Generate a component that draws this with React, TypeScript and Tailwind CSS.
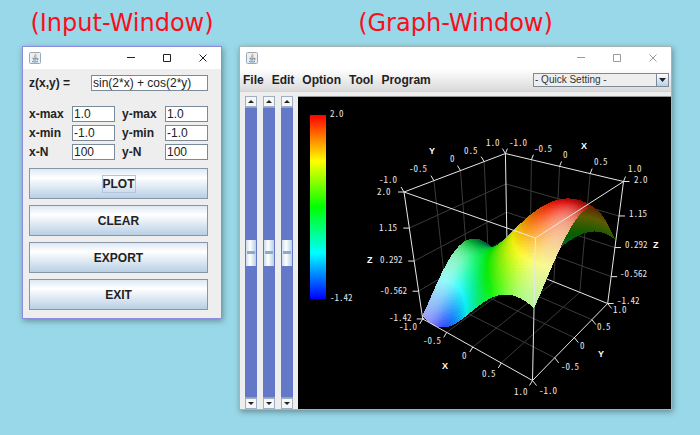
import { type ReactNode } from 'react'
import clsx from 'clsx'

type Point = [number, number]

const ALPHA = 1.238
const BETA = 1.318
const GAMMA = 1.238
const NEAR: Point = [535.5, 238]
const LEFT: Point = [404, 192]
const RIGHT: Point = [623.5, 181.5]
const DOWN: Point = [532.5, 380.5]

const Z_MIN = -1.42
const Z_MAX = 2
const STEPS = 80

// Perspective projection, written as a weighted mix of the nearest box corner and its neighbours
function project(x: number, y: number, z: number): Point {
  const u = (1 - x) / 2
  const v = (y + 1) / 2
  const w = (Z_MAX - z) / (Z_MAX - Z_MIN)
  const k = 1 - u - v - w
  const weight = k + u * ALPHA + v * BETA + w * GAMMA
  const mix = (i: 0 | 1) =>
    (k * NEAR[i] + u * ALPHA * LEFT[i] + v * BETA * RIGHT[i] + w * GAMMA * DOWN[i]) / weight
  return [mix(0), mix(1)]
}

const height = (x: number, y: number) => Math.sin(2 * x) + Math.cos(2 * y)

function hueToRgb(hue: number) {
  const channel = (n: number) => {
    const k = (n + hue / 60) % 6
    return 255 * (1 - Math.max(0, Math.min(k, 4 - k, 1)))
  }
  return [channel(5), channel(3), channel(1)]
}

function shade(x: number, y: number) {
  const nx = -1.17 * Math.cos(2 * x)
  const ny = 1.17 * Math.sin(2 * y)
  const len = Math.hypot(nx, ny, 1)
  const diffuse = (-0.2 * nx - 0.7 * ny + 0.65) / len
  const spec = Math.max(0, (0.3 * nx - 0.7 * ny + 0.65) / len)
  const light = Math.min(1, 0.36 + 0.64 * Math.max(0, diffuse))
  const white = 0.6 * Math.pow(spec, 5)
  const t = (Z_MAX - height(x, y)) / (Z_MAX - Z_MIN)
  const rgb = hueToRgb(240 * t).map((c) => Math.round(c * light * (1 - white) + 255 * white))
  return `rgb(${rgb.join(',')})`
}

function buildSurface() {
  const cells: { points: string; color: string }[] = []
  const d = 2 / STEPS
  // far cells first, so that near ones cover them
  for (let j = STEPS - 1; j >= 0; j--) {
    for (let i = 0; i < STEPS; i++) {
      const x = -1 + i * d
      const y = -1 + j * d
      const corners: Point[] = [
        [x, y],
        [x + d, y],
        [x + d, y + d],
        [x, y + d],
      ]
      cells.push({
        points: corners.map(([a, b]) => project(a, b, height(a, b)).map((n) => n.toFixed(2)).join(',')).join(' '),
        color: shade(x + d / 2, y + d / 2),
      })
    }
  }
  return cells
}

const surface = buildSurface()

type Vec3 = [number, number, number]

const H = [-0.5, 0, 0.5]
const V = [1.145, 0.29, -0.565]

const gridLines: [Vec3, Vec3][] = [
  ...H.flatMap((s): [Vec3, Vec3][] => [
    [[-1, s, Z_MIN], [-1, s, Z_MAX]],
    [[s, 1, Z_MIN], [s, 1, Z_MAX]],
    [[-1, s, Z_MIN], [1, s, Z_MIN]],
    [[s, -1, Z_MIN], [s, 1, Z_MIN]],
  ]),
  ...V.flatMap((z): [Vec3, Vec3][] => [
    [[-1, -1, z], [-1, 1, z]],
    [[-1, 1, z], [1, 1, z]],
  ]),
]

const backEdges: [Vec3, Vec3][] = [
  [[-1, 1, Z_MIN], [-1, 1, Z_MAX]],
  [[-1, 1, Z_MIN], [1, 1, Z_MIN]],
  [[-1, 1, Z_MIN], [-1, -1, Z_MIN]],
]

const frontEdges: [Vec3, Vec3][] = [
  [[-1, -1, Z_MAX], [-1, 1, Z_MAX]],
  [[-1, 1, Z_MAX], [1, 1, Z_MAX]],
  [[1, 1, Z_MAX], [1, -1, Z_MAX]],
  [[1, -1, Z_MAX], [-1, -1, Z_MAX]],
  [[-1, -1, Z_MAX], [-1, -1, Z_MIN]],
  [[1, -1, Z_MAX], [1, -1, Z_MIN]],
  [[1, 1, Z_MAX], [1, 1, Z_MIN]],
  [[-1, -1, Z_MIN], [1, -1, Z_MIN]],
  [[1, -1, Z_MIN], [1, 1, Z_MIN]],
]

const hTicks = [-1, ...H, 1]
const vTicks = [Z_MAX, ...V, Z_MIN]

const ticks: { at: Vec3; dir: Point }[] = [
  ...hTicks.flatMap((s): { at: Vec3; dir: Point }[] => [
    { at: [-1, s, Z_MAX], dir: [-3, -5] },
    { at: [s, 1, Z_MAX], dir: [2, -5] },
    { at: [s, -1, Z_MIN], dir: [-3, 5] },
    { at: [1, s, Z_MIN], dir: [4, 5] },
  ]),
  ...vTicks.flatMap((z): { at: Vec3; dir: Point }[] => [
    { at: [-1, -1, z], dir: [-6, 0] },
    { at: [1, 1, z], dir: [6, 0] },
  ]),
]

const labels: [string, number, number][] = [
  ['2.0', 330, 117],
  ['-1.42', 330, 301],
  ['1.0', 486, 146],
  ['0.5', 464, 154],
  ['0', 450, 162],
  ['-0.5', 409, 172],
  ['-1.0', 379, 183],
  ['2.0', 377, 195],
  ['1.15', 379, 231],
  ['0.292', 380, 263],
  ['-0.562', 380, 294],
  ['-1.42', 389, 321],
  ['-1.0', 399, 330],
  ['-0.5', 423, 344],
  ['0', 462, 359],
  ['0.5', 482, 377],
  ['1.0', 514, 395],
  ['-1.0', 539, 394],
  ['-0.5', 561, 370],
  ['0', 580, 349],
  ['0.5', 597, 330],
  ['1.0', 613, 313],
  ['-1.42', 617, 304],
  ['-0.562', 620, 277],
  ['0.292', 625, 248],
  ['1.15', 629, 217],
  ['2.0', 634, 183],
  ['1.0', 628, 172],
  ['0.5', 594, 165],
  ['0', 563, 158],
  ['-0.5', 534, 152],
  ['-1.0', 509, 146],
]

const axisNames: [string, number, number][] = [
  ['Y', 429, 154],
  ['X', 581, 149],
  ['Z', 367, 263],
  ['Z', 653, 248],
  ['X', 442, 369],
  ['Y', 598, 357],
]

function Segment({ from, to }: { from: Vec3; to: Vec3 }) {
  const [x1, y1] = project(...from)
  const [x2, y2] = project(...to)
  return <line x1={x1} y1={y1} x2={x2} y2={y2} />
}

function Graph() {
  return (
    <svg viewBox="298 97 373 312" className="block w-full bg-black" role="img" aria-label="Surface plot">
      <defs>
        <linearGradient id="scale" x1="0" y1="0" x2="0" y2="1">
          <stop offset="0" stopColor="#ff0000" />
          <stop offset="0.25" stopColor="#ffff00" />
          <stop offset="0.5" stopColor="#00ff00" />
          <stop offset="0.75" stopColor="#00ffff" />
          <stop offset="1" stopColor="#0000ff" />
        </linearGradient>
      </defs>
      <rect x="310" y="115" width="16" height="184" fill="url(#scale)" />
      <g stroke="#3a3a3a">
        {gridLines.map(([a, b], i) => (
          <Segment key={i} from={a} to={b} />
        ))}
      </g>
      <g stroke="#e8e8e8">
        {backEdges.map(([a, b], i) => (
          <Segment key={i} from={a} to={b} />
        ))}
      </g>
      <g shapeRendering="crispEdges">
        {surface.map((cell, i) => (
          <polygon key={i} points={cell.points} fill={cell.color} />
        ))}
      </g>
      <g stroke="#e8e8e8">
        {frontEdges.map(([a, b], i) => (
          <Segment key={i} from={a} to={b} />
        ))}
        {ticks.map(({ at, dir }, i) => {
          const [x, y] = project(...at)
          return <line key={i} x1={x} y1={y} x2={x + dir[0]} y2={y + dir[1]} />
        })}
      </g>
      <g className="fill-[#e6e6e6] font-['Noto_Sans_CJK_JP',monospace] text-[9px] [font-feature-settings:'hwid']">
        {labels.map(([text, x, y], i) => (
          <text key={i} x={x} y={y}>
            {text}
          </text>
        ))}
      </g>
      <g className="fill-white font-['Liberation_Sans',sans-serif] text-[9px] font-bold">
        {axisNames.map(([text, x, y], i) => (
          <text key={i} x={x} y={y}>
            {text}
          </text>
        ))}
      </g>
    </svg>
  )
}

function JavaIcon() {
  return (
    <svg viewBox="0 0 12 12" className="size-3">
      <rect x="0.5" y="0.5" width="11" height="11" rx="1" fill="#e9eff4" stroke="#9aa9b5" />
      <path d="M6.2 1.8c1.2 1.2-1.8 1.8-.2 3.6M7.5 3.3c-1 .7-.9 1.1-.4 2" fill="none" stroke="#e2813a" />
      <path d="M3.4 6.3h4.8c1.6 0 1.2 1.6-.2 1.6M4 7.9h3.4M3 9.5c1.6.6 4.4.6 6 0" fill="none" stroke="#55809f" strokeWidth="0.9" />
    </svg>
  )
}

const captionIcons = [
  { name: 'Minimize', d: 'M0 3.5h8' },
  { name: 'Maximize', d: 'M.5 .5h7v7h-7z' },
  { name: 'Close', d: 'M.5 .5l7 7M7.5 .5l-7 7' },
]

function TitleBar({ active }: { active?: boolean }) {
  return (
    <div className="flex h-[22px] items-center justify-between bg-white pl-[6px]">
      <JavaIcon />
      <div className={clsx('flex', active ? 'text-[#222]' : 'text-[#9a9a9a]')}>
        {captionIcons.map(({ name, d }) => (
          <button key={name} type="button" aria-label={name} className="flex h-[22px] w-9 items-center justify-center">
            <svg viewBox="0 0 8 8" className="size-2" fill="none" stroke="currentColor">
              <path d={d} />
            </svg>
          </button>
        ))}
      </div>
    </div>
  )
}

interface WindowProps {
  title: string
  active?: boolean
  className?: string
  titleClassName?: string
  children: ReactNode
}

function DesktopWindow({ title, active, className, titleClassName, children }: WindowProps) {
  return (
    <section className={className}>
      <h2
        className={clsx(
          "flex h-[46px] items-center font-['DejaVu_Sans',sans-serif] text-[24px] leading-none whitespace-nowrap text-[#fb0d1b]",
          titleClassName
        )}
      >
        {title}
      </h2>
      <div
        className={clsx(
          'border bg-[#eeeeee] shadow-[1px_2px_6px_rgba(0,0,0,0.35)]',
          active ? 'border-[#8d8ddf]' : 'border-[#a3b5b8]'
        )}
      >
        <TitleBar active={active} />
        {children}
      </div>
    </section>
  )
}

const fieldClass =
  'h-4 w-full min-w-0 border border-[#7a8a99] bg-white px-px text-[12px] leading-none text-[#222] outline-none'

const fields = [
  { id: 'x-max', value: '1.0' },
  { id: 'y-max', value: '1.0' },
  { id: 'x-min', value: '-1.0' },
  { id: 'y-min', value: '-1.0' },
  { id: 'x-N', value: '100' },
  { id: 'y-N', value: '100' },
]

function InputPanel() {
  return (
    <div className="pt-[6px] pr-[13px] pb-[8px] pl-[6px] text-[12px] leading-4 font-bold">
      <div className="mb-[15px] flex">
        <label htmlFor="formula" className="w-[62px] shrink-0">
          z(x,y) =
        </label>
        <input id="formula" defaultValue="sin(2*x) + cos(2*y)" className={clsx(fieldClass, 'font-normal')} />
      </div>
      <div className="mb-[8px] grid grid-cols-2 gap-x-[7px] gap-y-[3px]">
        {fields.map(({ id, value }) => (
          <div key={id} className="flex">
            <label htmlFor={id} className="w-[43px] shrink-0">
              {id}
            </label>
            <input id={id} defaultValue={value} className={clsx(fieldClass, 'font-normal')} />
          </div>
        ))}
      </div>
      <div className="flex flex-col gap-[6px]">
        {['PLOT', 'CLEAR', 'EXPORT', 'EXIT'].map((name, i) => (
          <button
            key={name}
            type="button"
            className="flex h-[31px] items-center justify-center border border-[#8796a6] bg-linear-to-b from-[#dde8f3] via-white via-30% to-[#b8cfe5]"
          >
            <span className={clsx(i === 0 && 'outline outline-[#b0c4de]')}>{name}</span>
          </button>
        ))}
      </div>
    </div>
  )
}

function ArrowButton({ up }: { up?: boolean }) {
  return (
    <button
      type="button"
      aria-label={up ? 'Increase' : 'Decrease'}
      className="flex h-[11px] shrink-0 items-center justify-center border border-[#a0b0c0] bg-[#f4f6f8]"
    >
      <svg viewBox="0 0 6 3" className="h-[3px] w-[6px] fill-[#222]">
        <path d={up ? 'M3 0l3 3H0z' : 'M0 0h6L3 3z'} />
      </svg>
    </button>
  )
}

function Scroller({ label }: { label: string }) {
  return (
    <div className="flex w-3 flex-col">
      <ArrowButton up />
      <input
        type="range"
        aria-label={label}
        defaultValue={50}
        className="m-0 h-0 min-h-0 w-3 flex-1 appearance-none border-x border-[#8fa3c4] bg-[#6478c8] [writing-mode:vertical-lr] [&::-webkit-slider-thumb]:h-[26px] [&::-webkit-slider-thumb]:w-[10px] [&::-webkit-slider-thumb]:appearance-none [&::-webkit-slider-thumb]:bg-[linear-gradient(#8fa8d0,#8fa8d0),linear-gradient(90deg,#c9dcee,#ffffff_40%,#b8cfe5)] [&::-webkit-slider-thumb]:bg-[size:8px_3px,100%_100%] [&::-webkit-slider-thumb]:bg-center [&::-webkit-slider-thumb]:bg-no-repeat"
      />
      <ArrowButton />
    </div>
  )
}

function GraphPanel() {
  return (
    <>
      <div className="flex h-[22px] items-center justify-between bg-linear-to-b from-white to-[#dadada] pr-[2px] pl-[3px]">
        <nav className="flex gap-2 text-[12px] leading-4 font-bold">
          <button type="button">File</button>
          <button type="button">Edit</button>
          <button type="button">Option</button>
          <button type="button">Tool</button>
          <button type="button">Program</button>
        </nav>
        <div className="relative flex w-[136px]">
          <select
            aria-label="Quick Setting"
            className="h-[14px] w-full appearance-none border border-[#7a8a99] bg-[#eeeeee] pl-px text-[10px] leading-3 text-[#333]"
          >
            <option>- Quick Setting -</option>
          </select>
          <span className="pointer-events-none absolute inset-y-0 right-0 flex w-[13px] items-center justify-center border border-[#7a8a99] bg-linear-to-b from-white to-[#b8cfe5]">
            <svg viewBox="0 0 7 4" className="h-1 w-[7px] fill-[#222]">
              <path d="M0 0h7L3.500 4z" />
            </svg>
          </span>
        </div>
      </div>
      <div className="flex border-t border-[#d4d4d4] pt-[4px]">
        <div className="flex w-[58px] shrink-0 gap-[6px] pl-[5px]">
          <Scroller label="Scroll 1" />
          <Scroller label="Scroll 2" />
          <Scroller label="Scroll 3" />
        </div>
        <div className="min-w-0 flex-1 border-t border-[#999]">
          <Graph />
        </div>
      </div>
    </>
  )
}

export default function App() {
  return (
    <main className="flex min-h-screen items-start gap-[17px] bg-[#99d8e8] pr-7 pb-6 pl-[22px] font-['Liberation_Sans',sans-serif] text-[#222]">
      <DesktopWindow title="(Input-Window)" active className="w-[200px] shrink-0" titleClassName="justify-center">
        <InputPanel />
      </DesktopWindow>
      <DesktopWindow title="(Graph-Window)" className="min-w-0 flex-1" titleClassName="justify-center">
        <GraphPanel />
      </DesktopWindow>
    </main>
  )
}
